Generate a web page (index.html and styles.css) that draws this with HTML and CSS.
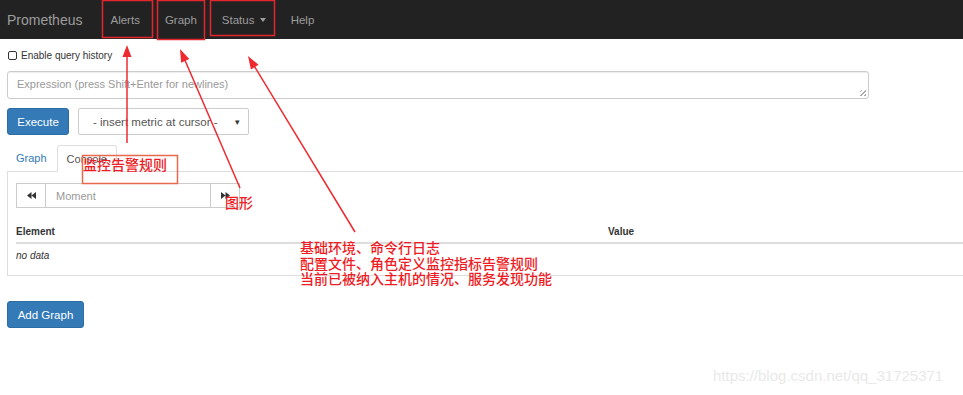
FILE: index.html
```html
<html>
    <head>
        <title>Prometheus Time Series Collection and Processing Server</title>
        <link rel="stylesheet" href="styles.css">
    </head>
    <body>
        <div class="navbar">
            <span class="brand">Prometheus</span>
            <a class="navlink" href="#">Alerts</a>
            <a class="navlink" href="#">Graph</a>
            <a class="navlink" href="#">Status <span class="caret"></span></a>
            <a class="navlink" href="#">Help</a>
        </div>

        <div class="main">
            <label class="history"><span class="check"></span>Enable query history</label>

            <div class="expr">Expression (press Shift+Enter for newlines)<span class="grip"></span></div>

            <div class="controls">
                <button class="btn btn-primary">Execute</button>
                <div class="select">- insert metric at cursor -<span class="arrow">&#9662;</span></div>
            </div>

            <div class="tabs">
                <span class="tab">Graph</span>
                <span class="tab active">Console</span>
            </div>
            <div class="panel">
                <div class="moment">
                    <span class="step">
                        <svg width="9" height="7" viewBox="0 0 9 7"><path d="M4.5 0V7L0 3.5Z M9 0V7L4.5 3.5Z" fill="#333"/></svg>
                    </span>
                    <span class="moment-input">Moment</span>
                    <span class="step">
                        <svg width="9" height="7" viewBox="0 0 9 7"><path d="M0 0V7L4.5 3.5Z M4.5 0V7L9 3.5Z" fill="#333"/></svg>
                    </span>
                </div>
                <table class="result">
                    <tr><th class="col-el">Element</th><th>Value</th></tr>
                    <tr><td class="empty" colspan="2">no data</td></tr>
                </table>
            </div>

            <button class="btn btn-primary add">Add Graph</button>
        </div>

        <!-- annotations drawn on top of the screenshot -->
        <svg class="marks" width="963" height="395">
            <g fill="none" stroke="#e3262e" stroke-width="1.5">
                <rect x="102.5" y="0.5" width="50" height="37"/>
                <rect x="157.5" y="0.5" width="47" height="39"/>
                <rect x="210.5" y="0.5" width="64" height="35"/>
            </g>
            <rect x="82.5" y="155.5" width="95" height="28" fill="none" stroke="#e86a4c" stroke-width="1.5"/>
            <g stroke="#ee2a30" stroke-width="1.5">
                <line x1="127" y1="55" x2="127" y2="143"/>
                <line x1="184" y1="58" x2="240" y2="188"/>
                <line x1="253" y1="64" x2="355" y2="232"/>
            </g>
            <g fill="#ee2a30">
                <polygon points="127,45 122.5,57 131.5,57"/>
                <polygon points="180,49 189.3,59.1 181.1,62.7"/>
                <polygon points="248,56 258.6,64.8 250.9,69.4"/>
            </g>
        </svg>
        <div class="note note-rules">监控告警规则</div>
        <div class="note note-graph">图形</div>
        <div class="note note-status">基础环境、命令行日志<br>配置文件、角色定义监控指标告警规则<br>当前已被纳入主机的情况、服务发现功能</div>
        <div class="watermark">https://blog.csdn.net/qq_31725371</div>
    </body>
</html>
```

FILE: styles.css
```css
BODY {margin:0; width:963px; height:395px; overflow:hidden; position:relative; background:white; color:#333; font-family:"Liberation Sans", Arial, sans-serif; font-size:11px;}

.navbar {display:flex; align-items:center; height:39px; background:#222;}
.brand {color:#9d9d9d; font-size:14px; padding:0 15.5px 0 7px;}
.navlink {color:#9d9d9d; text-decoration:none; padding:0 12.5px; font-size:11.5px;}
.caret {display:inline-block; width:0; height:0; margin-left:2px; vertical-align:middle; border-top:4px solid #9d9d9d; border-left:3px solid transparent; border-right:3px solid transparent;}

.main {padding:0 0 0 7px;}
.history {display:flex; align-items:center; height:14px; margin-top:9px; font-size:10px; color:#333;}
.check {width:7px; height:7px; border:1px solid #333; border-radius:2px; margin:0 4px 0 1px;}

.expr {position:relative; box-sizing:border-box; width:862px; height:28px; margin-top:9px; padding:6px 9px; border:1px solid #ccc; border-radius:3px; color:#999; font-size:11px; box-shadow:inset 0 1px 1px rgba(0,0,0,.075);}
.grip {position:absolute; right:2px; bottom:2px; width:6px; height:6px; background:repeating-linear-gradient(135deg, transparent 0 1px, #aaa 1px 2px, transparent 2px 3px);}

.controls {display:flex; gap:9px; margin-top:9px;}
.btn {box-sizing:border-box; border:1px solid #2e6da4; border-radius:3px; font-family:inherit; font-size:11.5px; padding:0;}
.btn-primary {background:#337ab7; color:white;}
.controls .btn {width:62px; height:27px;}
.select {box-sizing:border-box; display:flex; align-items:center; width:171px; height:27px; padding:0 8px 0 14px; border:1px solid #ccc; border-radius:2px; color:#555; font-size:11.5px;}
.arrow {margin-left:auto; font-size:9px; color:#333;}

.tabs {display:flex; margin-top:10px; height:26px; border-bottom:1px solid #ddd;}
.tab {box-sizing:border-box; height:27px; padding:7px 9px 0 9px; color:#337ab7;}
.tab.active {color:#555; background:white; border:1px solid #ddd; border-bottom-color:white; border-radius:3px 3px 0 0; margin-left:1px; width:60px; padding-left:9px;}

.panel {box-sizing:border-box; width:980px; height:104px; border:1px solid #ddd; border-top:none; padding:11px 0 0 8px;}
.moment {display:flex; height:25px;}
.step {box-sizing:border-box; display:flex; align-items:center; justify-content:center; width:30px; border:1px solid #ccc;}
.moment-input {box-sizing:border-box; display:flex; align-items:center; width:164px; padding-left:10px; border:1px solid #ccc; border-left:none; border-right:none; color:#999;}

.result {border-collapse:collapse; width:955px; margin-top:17px;}
.result th {text-align:left; font-size:10px; font-weight:bold; padding:1px 0 5px 0; border-bottom:2px solid #ddd;}
.col-el {width:592px;}
.result td {padding:6px 0 5px 0; font-size:10px;}
.empty {font-style:italic; color:#333;}

.add {width:77px; height:27px; margin-top:25px;}

.marks {position:absolute; left:0; top:0;}
.note {position:absolute; color:#ee1c25; font-family:"Noto Sans CJK SC", sans-serif; font-size:14px; font-weight:500; line-height:15.5px;}
.note-rules {left:83px; top:157px;}
.note-graph {left:225px; top:195px;}
.note-status {left:300px; top:240px;}
.watermark {position:absolute; left:713px; top:367px; font-size:15px; color:#e9e9e9;}
```
